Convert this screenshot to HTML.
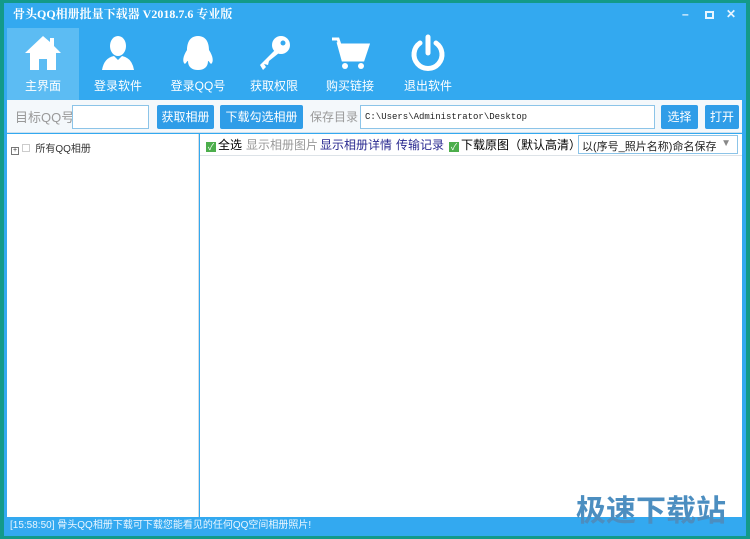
<!DOCTYPE html>
<html><head><meta charset="utf-8"><style>
*{margin:0;padding:0;box-sizing:border-box}
body{width:750px;height:539px;overflow:hidden;background:#139a8a;font-family:"Liberation Sans","Noto Sans CJK SC",sans-serif;position:relative}
.win{position:absolute;left:4px;top:3px;width:742px;height:533px;background:#33a9f0}
.title{position:absolute;left:9px;top:2px;color:#fff;font-size:12px;font-weight:bold;font-family:"Liberation Serif","Noto Serif CJK SC",serif}
.ctl{position:absolute;top:4px;color:#e8f5ff;font-size:12px;font-weight:bold}
.tab{position:absolute;top:25px;width:72px;height:72px;color:#fff;text-align:center;font-size:12px}
.tab svg{display:block;margin:6px auto 5px}
.tab.sel{background:#5cbcf3}
.row{position:absolute;left:3px;top:97px;width:735px;height:33px;background:#f4f8fb;border-bottom:1px solid #cfe1ee}
.lbl{position:absolute;font-size:12px;color:#999}
.inp{position:absolute;background:#fff;border:1px solid #8cc4e8;height:24px}
.btn{position:absolute;background:#2f9de8;color:#fff;font-size:12px;height:24px;line-height:24px;text-align:center;border-radius:2px}
.left{position:absolute;left:3px;top:131px;width:192px;height:383px;background:#fff;border-right:1px solid #d8dde2}
.main{position:absolute;left:196px;top:131px;width:542px;height:383px;background:#fff}
.bar{position:absolute;left:0;top:0;width:542px;height:22px;border-bottom:1px solid #dde3e8;font-size:12px}
.bar span{position:absolute;top:2px;white-space:nowrap}
.ck{display:inline-block;width:10px;height:10px;background:#4cae4c;vertical-align:-1px;margin-right:2px;color:#fff;font-size:9px;line-height:10px;text-align:center;font-style:normal}
.status{position:absolute;left:3px;top:514px;width:735px;height:17px;color:#eaf6ff;font-size:10px;line-height:17px;padding-left:3px}
.wm{position:absolute;left:576px;top:486px;font-size:30px;font-weight:bold;color:#4c8ec0}
</style></head><body>
<div class="win">
<div class="title">骨头QQ相册批量下载器 V2018.7.6 专业版</div>
<div class="ctl" style="left:678px">–</div>
<div class="ctl" style="left:701px;top:8px;width:9px;height:8px;border:2px solid #e8f5ff"></div>
<div class="ctl" style="left:722px">✕</div>

<div class="tab sel" style="left:3px"><svg width="40" height="38" viewBox="0 0 40 38"><path d="M20 2 L2 19 H7 V36 H16 V25 H24 V36 H33 V19 H38 L31 12 V4 H27 V8 Z" fill="#fff"/></svg>主界面</div>
<div class="tab" style="left:78px"><svg width="40" height="38" viewBox="0 0 40 38"><ellipse cx="20" cy="12" rx="8" ry="10" fill="#fff"/><path d="M4 36 Q6 24 16 22 L20 26 L24 22 Q34 24 36 36Z" fill="#fff"/></svg>登录软件</div>
<div class="tab" style="left:158px"><svg width="40" height="38" viewBox="0 0 40 38"><path d="M20 2 C10 2 9 12 9 16 C5 22 4 28 7 30 C9 28 9 27 10 27 C10 33 14 36 20 36 C26 36 30 33 30 27 C31 27 31 28 33 30 C36 28 35 22 31 16 C31 12 30 2 20 2Z" fill="#fff"/></svg>登录QQ号</div>
<div class="tab" style="left:234px"><svg width="40" height="38" viewBox="0 0 40 38"><circle cx="27" cy="11" r="9" fill="#fff"/><path d="M22 15 L6 31 L9 36 L12 33 L10 30 L14 31 L15 27 L25 19Z" fill="#fff"/><circle cx="29" cy="9" r="2.5" fill="#33a9f0"/></svg>获取权限</div>
<div class="tab" style="left:310px"><svg width="40" height="38" viewBox="0 0 40 38"><path d="M2 5 H8 L10 11 H38 L33 26 H13 L8 8" fill="none" stroke="#fff" stroke-width="3"/><path d="M10 11 H38 L33 26 H13Z" fill="#fff"/><circle cx="15" cy="32" r="3" fill="#fff"/><circle cx="31" cy="32" r="3" fill="#fff"/></svg>购买链接</div>
<div class="tab" style="left:388px"><svg width="40" height="38" viewBox="0 0 40 38"><path d="M12 9 A14 14 0 1 0 28 9" fill="none" stroke="#fff" stroke-width="5" stroke-linecap="round"/><line x1="20" y1="3" x2="20" y2="19" stroke="#fff" stroke-width="5" stroke-linecap="round"/></svg>退出软件</div>

<div class="row">
<div class="lbl" style="left:8px;top:7px;font-size:13px">目标QQ号</div>
<div class="inp" style="left:65px;top:5px;width:77px"></div>
<div class="btn" style="left:150px;top:5px;width:57px">获取相册</div>
<div class="btn" style="left:213px;top:5px;width:83px">下载勾选相册</div>
<div class="lbl" style="left:303px;top:8px;font-size:12px">保存目录</div>
<div class="inp" style="left:353px;top:5px;width:295px;font-family:'Liberation Mono',monospace;font-size:9px;line-height:22px;padding-left:4px;color:#222">C:\Users\Administrator\Desktop</div>
<div class="btn" style="left:654px;top:5px;width:37px">选择</div>
<div class="btn" style="left:698px;top:5px;width:34px">打开</div>
</div>

<div class="left"><div style="position:absolute;left:4px;top:6px;font-size:10px;color:#333;white-space:nowrap"><span style="display:inline-block;width:8px;height:8px;border:1px solid #777;font-size:7px;line-height:6px;text-align:center">+</span> <span style="display:inline-block;width:8px;height:8px;border:1px solid #ccc"></span>&nbsp; 所有QQ相册</div></div>

<div class="main">
<div class="bar">
<span style="left:6px"><i class="ck">✓</i>全选</span>
<span style="left:46px;color:#999">显示相册图片</span>
<span style="left:120px;color:#2a2a90">显示相册详情</span>
<span style="left:196px;color:#2a2a90">传输记录</span>
<span style="left:249px"><i class="ck">✓</i>下载原图（默认高清）</span>
<span style="left:378px;top:1px;width:160px;height:19px;border:1px solid #8cc4e8;font-size:11px;padding:2px 3px;color:#222">以(序号_照片名称)命名保存<b style="position:absolute;right:6px;color:#888;font-size:10px">▼</b></span>
</div>
</div>

<div class="status">[15:58:50] 骨头QQ相册下载可下载您能看见的任何QQ空间相册照片!</div>
</div>
<div class="wm">极速下载站</div>
</body></html>
